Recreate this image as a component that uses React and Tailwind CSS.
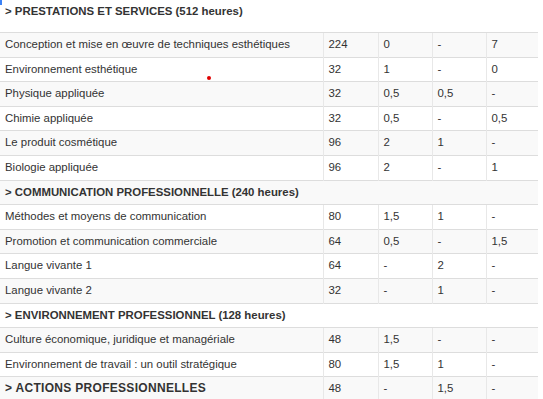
const sections = [
  {
    title: "> PRESTATIONS ET SERVICES (512 heures)",
    outside: true,
    rows: [
      ["Conception et mise en œuvre de techniques esthétiques", "224", "0", "-", "7"],
      ["Environnement esthétique", "32", "1", "-", "0"],
      ["Physique appliquée", "32", "0,5", "0,5", "-"],
      ["Chimie appliquée", "32", "0,5", "-", "0,5"],
      ["Le produit cosmétique", "96", "2", "1", "-"],
      ["Biologie appliquée", "96", "2", "-", "1"],
    ],
  },
  {
    title: "> COMMUNICATION PROFESSIONNELLE (240 heures)",
    rows: [
      ["Méthodes et moyens de communication", "80", "1,5", "1", "-"],
      ["Promotion et communication commerciale", "64", "0,5", "-", "1,5"],
      ["Langue vivante 1", "64", "-", "2", "-"],
      ["Langue vivante 2", "32", "-", "1", "-"],
    ],
  },
  {
    title: "> ENVIRONNEMENT PROFESSIONNEL (128 heures)",
    rows: [
      ["Culture économique, juridique et managériale", "48", "1,5", "-", "-"],
      ["Environnement de travail : un outil stratégique", "80", "1,5", "1", "-"],
    ],
  },
];

export default function App() {
  // flatten to table rows, first section title sits above the table
  const rows = [];
  sections.forEach((s) => {
    if (!s.outside) rows.push({ head: s.title });
    s.rows.forEach((r) => rows.push({ cells: r }));
  });
  rows.push({ cells: ["> ACTIONS PROFESSIONNELLES", "48", "-", "1,5", "-"], bold: true });

  return (
    <div className="relative w-[543px] h-[399px] overflow-hidden bg-white text-[11.4px] text-[#333] font-['Liberation_Sans',Arial,sans-serif]">
      <div className="absolute left-0 top-0 w-[2px] h-[5px] bg-[#3b82f6]" />
      <div className="absolute left-[207px] top-[76px] w-[4px] h-[4px] rounded-full bg-[#e00000]" />

      <div className="h-[32px] pl-[5px] pt-[2px] leading-[18px] font-bold">{sections[0].title}</div>

      <table className="w-[538px] table-fixed border-collapse">
        <colgroup>
          <col className="w-[323px]" />
          <col className="w-[55px]" />
          <col className="w-[54px]" />
          <col className="w-[54px]" />
          <col className="w-[52px]" />
        </colgroup>
        <tbody>
          {rows.map((r, i) => (
            <tr key={i} className={i % 2 === 0 ? "bg-[#f9f9f9]" : "bg-white"}>
              {r.head ? (
                <td colSpan={5} className="border-t border-[#ddd] px-[5px] py-[3px] leading-[17.6px] font-bold">
                  {r.head}
                </td>
              ) : (
                r.cells.map((c, j) => (
                  <td
                    key={j}
                    className={`border-t border-[#ddd] px-[5px] py-[3px] leading-[17.6px] whitespace-nowrap ${
                      j > 0 ? "border-l border-l-[#e8e8e8]" : ""
                    } ${r.bold && j === 0 ? "font-bold text-[12px] tracking-[0.3px]" : ""}`}
                  >
                    {c}
                  </td>
                ))
              )}
            </tr>
          ))}
        </tbody>
      </table>
    </div>
  );
}
